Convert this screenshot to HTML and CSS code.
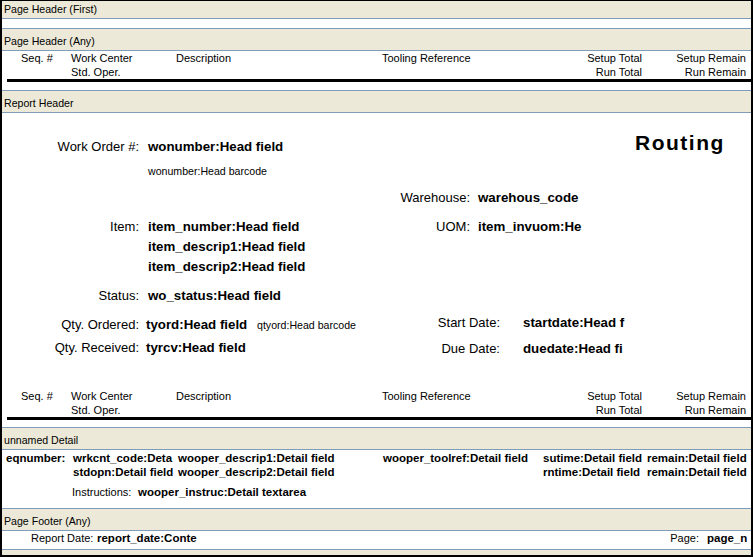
FILE: index.html
```html
<!DOCTYPE html>
<html>
<head>
<meta charset="utf-8">
<title>Routing report layout</title>
<link rel="stylesheet" href="styles.css">
</head>
<body>
<div class="frame">
  <div class="band band-first"><span class="band-label">Page Header (First)</span></div>
  <div class="sec sec-empty"></div>

  <div class="band"><span class="band-label">Page Header (Any)</span></div>
  <div class="sec phdr">
    <div class="colhead">
      <span>Seq. #</span><span>Work Center</span><span>Description</span><span>Tooling Reference</span><span class="r">Setup Total</span><span class="r">Setup Remain</span>
      <span></span><span>Std. Oper.</span><span></span><span></span><span class="r">Run Total</span><span class="r">Run Remain</span>
    </div>
    <div class="rule"></div>
  </div>

  <div class="band"><span class="band-label">Report Header</span></div>
  <div class="sec rh">
    <div class="rh-body">
      <div class="rh-left">
        <div class="frow wo"><span class="lbl">Work Order #:</span><span class="val">wonumber:Head field</span></div>
        <div class="barcode bc-wo">wonumber:Head barcode</div>
        <div class="frow item"><span class="lbl">Item:</span><span class="val">item_number:Head field</span></div>
        <div class="frow"><span class="lbl"></span><span class="val">item_descrip1:Head field</span></div>
        <div class="frow"><span class="lbl"></span><span class="val">item_descrip2:Head field</span></div>
        <div class="frow status"><span class="lbl">Status:</span><span class="val">wo_status:Head field</span></div>
        <div class="frow qord"><span class="lbl">Qty. Ordered:</span><span class="qval">tyord:Head field</span><span class="barcode bc-q">qtyord:Head barcode</span></div>
        <div class="frow qrcv"><span class="lbl">Qty. Received:</span><span class="qval">tyrcv:Head field</span></div>
      </div>
      <div class="rh-right">
        <div class="title">Routing</div>
        <div class="frow wh"><span class="lbl lbl-wh">Warehouse:</span><span class="val fix">warehous_code</span></div>
        <div class="frow uom"><span class="lbl lbl-wh">UOM:</span><span class="val fix">item_invuom:He</span></div>
        <div class="frow sdate"><span class="lbl lbl-date">Start Date:</span><span class="val fix val-date">startdate:Head f</span></div>
        <div class="frow ddate"><span class="lbl lbl-date">Due Date:</span><span class="val fix val-date">duedate:Head fi</span></div>
      </div>
    </div>
    <div class="rh-bottom">
      <div class="colhead">
        <span>Seq. #</span><span>Work Center</span><span>Description</span><span>Tooling Reference</span><span class="r">Setup Total</span><span class="r">Setup Remain</span>
        <span></span><span>Std. Oper.</span><span></span><span></span><span class="r">Run Total</span><span class="r">Run Remain</span>
      </div>
      <div class="rule"></div>
    </div>
  </div>

  <div class="band"><span class="band-label">unnamed Detail</span></div>
  <div class="sec detail">
    <div class="drow">
      <span>eqnumber:</span>
      <span>wrkcnt_code:Deta</span>
      <span>wooper_descrip1:Detail field</span>
      <span>wooper_toolref:Detail field</span>
      <span class="rcell">sutime:Detail field</span>
      <span>remain:Detail field</span>
    </div>
    <div class="drow">
      <span></span>
      <span>stdopn:Detail field</span>
      <span>wooper_descrip2:Detail field</span>
      <span></span>
      <span class="rcell">rntime:Detail field</span>
      <span>remain:Detail field</span>
    </div>
    <div class="instr"><span class="instr-lbl">Instructions:</span><span class="instr-val">wooper_instruc:Detail textarea</span></div>
  </div>

  <div class="band"><span class="band-label">Page Footer (Any)</span></div>
  <div class="sec footer">
    <span class="f-lbl">Report Date:</span>
    <span class="f-val">report_date:Conte</span>
    <span class="f-spacer"></span>
    <span class="f-pg">Page:</span>
    <span class="f-pgval">page_n</span>
  </div>
  <div class="tail"></div>
</div>
</body>
</html>
```
FILE: styles.css
```css
* { box-sizing: border-box; }
html, body { margin: 0; padding: 0; background: #fff; }

.frame {
  width: 753px;
  height: 557px;
  border: 2px solid #000;
  border-top-width: 1px;
  background: #ece9d8;
  display: flex;
  flex-direction: column;
  overflow: hidden;
  font-family: "Liberation Sans", Arial, sans-serif;
  color: #000;
}

.band {
  flex: none;
  height: 22px;
  border-bottom: 1px solid #7f9db9;
  display: flex;
  align-items: flex-end;
  padding: 0 0 2px 2px;
}
.band-first { height: 18px; }
.band-label { font-size: 10.6px; line-height: 13px; white-space: nowrap; }

.sec { flex: none; background: #fff; border-bottom: 1px solid #7f9db9; }
.sec-empty { height: 10px; }
.phdr { height: 40px; }
.rh { height: 315px; display: flex; flex-direction: column; }
.detail { height: 59px; padding-top: 1px; }
.footer { height: 19px; }
.tail { flex: 1; }

/* column header */
.colhead {
  display: grid;
  grid-template-columns: 50px 105px 206px 160px 100px 104px;
  padding-left: 19px;
  font-size: 11px;
  line-height: 14px;
  white-space: nowrap;
}
.colhead .r { text-align: right; }
.rule { margin-left: 5px; height: 3px; background: #000; }

/* report header */
.rh-body { display: flex; }
.rh-left { width: 380px; flex: none; }
.rh-right { flex: 1; }
.rh-bottom { margin-top: auto; padding-bottom: 7px; }

.frow { display: flex; height: 20px; line-height: 20px; white-space: nowrap; align-items: center; }
.lbl { width: 137px; flex: none; text-align: right; font-size: 13px; }
.val { margin-left: 9px; font-weight: bold; font-size: 13.3px; }
.qval { width: 99px; flex: none; margin-left: 7px; font-weight: bold; font-size: 13.3px; }

.wo { margin-top: 24px; }
.barcode { font-size: 10.6px; white-space: nowrap; }
.bc-wo { line-height: 14px; margin-top: 7px; padding-left: 146px; }
.item { margin-top: 39px; }
.status { margin-top: 9px; }
.qord { margin-top: 9px; }
.qrcv { margin-top: 3px; }
.bc-q { margin-left: 12px; }

.title {
  margin-top: 18px;
  padding-left: 253px;
  font-size: 21px;
  font-weight: bold;
  letter-spacing: 1.5px;
  line-height: 24px;
  white-space: nowrap;
}
.lbl-wh { width: 88px; }
.fix { width: 99px; flex: none; }
.wh .fix, .uom .fix { margin-left: 8px; }
.wh { margin-top: 33px; }
.uom { margin-top: 9px; }
.lbl-date { width: 118px; }
.val-date { margin-left: 23px; }
.sdate { margin-top: 76px; }
.ddate { margin-top: 6px; }

/* detail */
.drow {
  display: grid;
  grid-template-columns: 67px 105px 205px 158px 106px 99px;
  padding-left: 4px;
  line-height: 14px;
  font-weight: bold;
  font-size: 11.5px;
  white-space: nowrap;
}
.drow .rcell { padding-left: 2px; }
.instr { margin-top: 6px; padding-left: 70px; display: flex; line-height: 14px; white-space: nowrap; }
.instr-lbl { width: 66px; flex: none; font-size: 11px; }
.instr-val { font-weight: bold; font-size: 11.5px; }

/* footer */
.footer { display: flex; padding-left: 29px; padding-right: 5px; line-height: 14px; white-space: nowrap; }
.f-lbl { width: 66px; flex: none; font-size: 11px; }
.f-val { width: 99px; flex: none; font-weight: bold; font-size: 11.5px; }
.f-spacer { flex: 1; }
.f-pg { font-size: 11px; margin-right: 8px; }
.f-pgval { width: 39px; flex: none; font-weight: bold; font-size: 11.5px; }
```
